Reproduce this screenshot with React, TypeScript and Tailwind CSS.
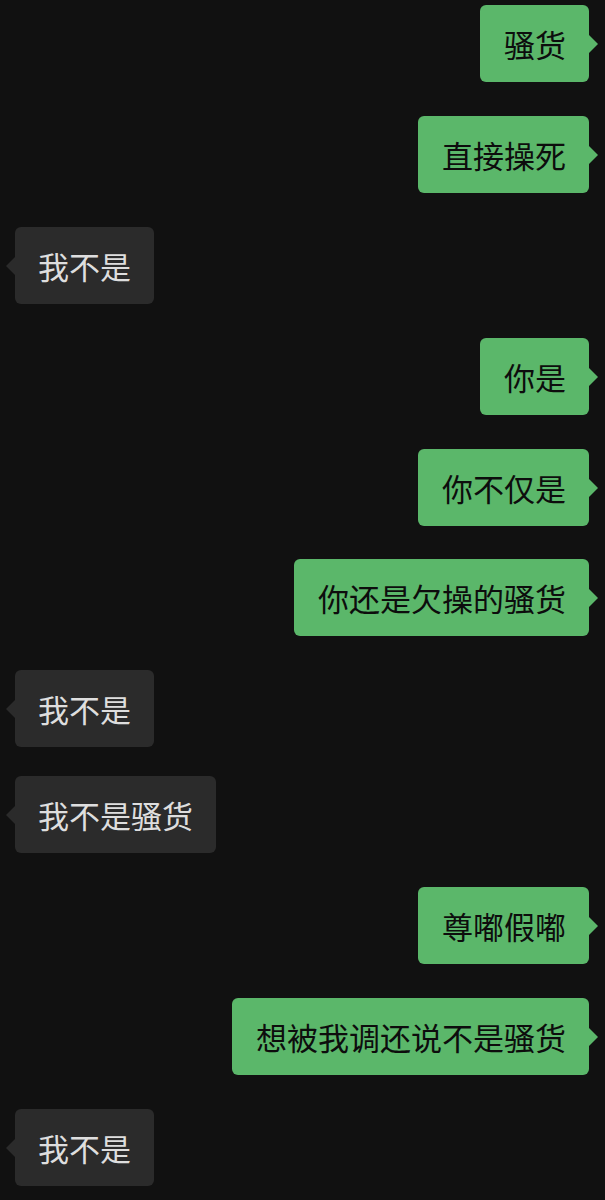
import React from "react";

type Msg = { text: string; me: boolean; gap: number };

const msgs: Msg[] = [
  { text: "骚货", me: true, gap: 5 },
  { text: "直接操死", me: true, gap: 34 },
  { text: "我不是", me: false, gap: 34 },
  { text: "你是", me: true, gap: 34 },
  { text: "你不仅是", me: true, gap: 34 },
  { text: "你还是欠操的骚货", me: true, gap: 33 },
  { text: "我不是", me: false, gap: 34 },
  { text: "我不是骚货", me: false, gap: 29 },
  { text: "尊嘟假嘟", me: true, gap: 34 },
  { text: "想被我调还说不是骚货", me: true, gap: 34 },
  { text: "我不是", me: false, gap: 34 },
];

function Bubble({ m }: { m: Msg }) {
  if (m.me) {
    return (
      <div className="flex justify-end pr-[16px]" style={{ marginTop: m.gap }}>
        <div className="relative h-[77px] flex items-center pl-[24px] pr-[23px] rounded-[6px] bg-[#5bb76a] text-[#0d0d0d] text-[31px] leading-none">
          {m.text}
          <span className="absolute right-[-9px] top-1/2 -translate-y-1/2 w-0 h-0 border-y-[9px] border-y-transparent border-l-[9px] border-l-[#5bb76a]" />
        </div>
      </div>
    );
  }
  return (
    <div className="flex justify-start pl-[15px]" style={{ marginTop: m.gap }}>
      <div className="relative h-[77px] flex items-center px-[23px] rounded-[6px] bg-[#2b2b2b] text-[#dedede] text-[31px] leading-none">
        {m.text}
        <span className="absolute left-[-9px] top-1/2 -translate-y-1/2 w-0 h-0 border-y-[9px] border-y-transparent border-r-[9px] border-r-[#2b2b2b]" />
      </div>
    </div>
  );
}

export default function App() {
  return (
    <div
      className="w-[605px] h-[1200px] bg-[#111111] flex flex-col overflow-hidden"
      style={{ fontFamily: '"Noto Sans CJK SC", "Noto Sans", sans-serif' }}
    >
      {msgs.map((m, i) => (
        <Bubble key={i} m={m} />
      ))}
    </div>
  );
}
